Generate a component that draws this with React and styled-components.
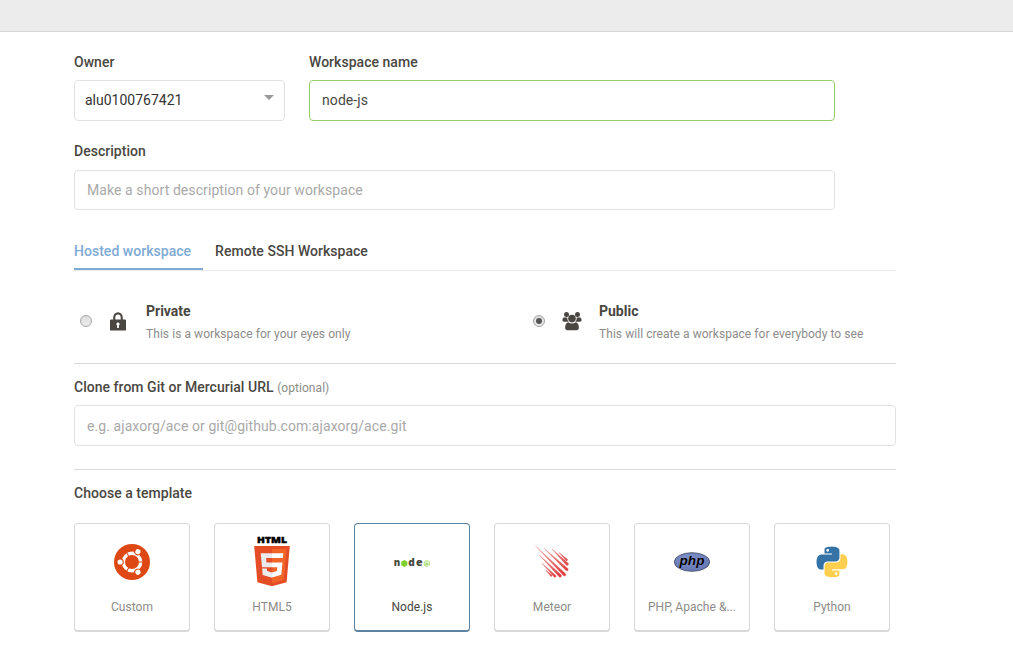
import React from "react";
import styled, { createGlobalStyle, css } from "styled-components";

const GlobalStyle = createGlobalStyle`
  * { box-sizing: border-box; }
  html, body { margin: 0; padding: 0; background: #fff; overflow: hidden; }
  body { font-family: Roboto, "Liberation Sans", sans-serif; font-size: 14px; color: #4a4742; }
`;

const TopBar = styled.header`
  height: 32px;
  background: #ececec;
  border-bottom: 1px solid #d9d9d9;
`;

const Form = styled.main`
  width: 822px;
  margin: 0 0 0 74px;
  padding-top: 21px;
`;

const FieldRow = styled.div`
  display: flex;
  gap: 24px;
  width: 761px;
`;

const Field = styled.div`
  width: ${(p) => p.$width || "100%"};
  margin-top: ${(p) => p.$top || 0}px;
`;

const Label = styled.label`
  display: block;
  height: 18px;
  line-height: 18px;
  font-weight: 500;
  letter-spacing: 0.03px;
  white-space: nowrap;
  margin-bottom: ${(p) => (p.$gap === undefined ? 9 : p.$gap)}px;
`;

const Optional = styled.span`
  font-size: 12px;
  font-weight: 400;
  letter-spacing: 0.06px;
  color: #8d8c8a;
`;

const boxed = css`
  display: flex;
  align-items: center;
  width: 100%;
  height: ${(p) => p.$height || 41}px;
  border: 1px solid ${(p) => (p.$valid ? "#98cc69" : "#e2e2e2")};
  border-radius: 4px;
  background: #fff;
`;

const Select = styled.div`
  ${boxed}
  justify-content: space-between;
  padding: 0 10px 2px;
  color: #333;
`;

const Arrow = styled.span`
  border: 5px solid transparent;
  border-top-color: #999;
  border-bottom: 0;
  margin-bottom: 4px;
`;

const Input = styled.input`
  ${boxed}
  padding: 0 12px ${(p) => (p.$valid ? 2 : 0)}px;
  font: inherit;
  color: #4a4742;
  letter-spacing: 0.08px;
  outline: none;
  &::placeholder { color: #a9a9a9; opacity: 1; }
`;

const Tabs = styled.nav`
  display: flex;
  gap: 12px;
  height: 39px;
  margin-top: 22px;
  border-bottom: 1px solid #ebebeb;
`;

const Tab = styled.a`
  height: 38px;
  padding: 10px 12px 0 0;
  line-height: 18px;
  font-weight: 500;
  letter-spacing: 0.03px;
  white-space: nowrap;
  color: ${(p) => (p.$active ? "#7eaad4" : "#4a4742")};
  border-bottom: 2px solid ${(p) => (p.$active ? "#7eaad4" : "transparent")};
`;

const Privacy = styled.section`
  display: grid;
  grid-template-columns: 453px 1fr;
  height: 93px;
  padding-top: 31px;
  border-bottom: 1px solid #d9d9d9;
`;

const Option = styled.div`
  display: grid;
  grid-template-columns: 30px 36px 1fr;
  padding-left: 6px;
`;

const Radio = styled.span`
  display: flex;
  align-items: center;
  justify-content: center;
  width: 12px;
  height: 12px;
  margin-top: 13px;
  border: 1px solid #a5a5a5;
  border-radius: 50%;
  background: linear-gradient(#dedede, #ececec);
  &::after {
    content: "";
    width: 6px;
    height: 6px;
    border-radius: 50%;
    background: ${(p) => (p.$checked ? "#555" : "transparent")};
  }
`;

const OptionIcon = styled.svg`
  display: block;
  width: 20px;
  height: 20px;
  margin: 9px 0 0 ${(p) => p.$shift || 0}px;
  fill: #4a4742;
`;

const OptionTitle = styled.div`
  line-height: 18px;
  font-weight: 700;
`;

const OptionNote = styled.div`
  margin-top: 5px;
  line-height: 18px;
  font-size: 12px;
  letter-spacing: 0.06px;
  color: #8d8c8a;
  white-space: nowrap;
`;

const Divider = styled.hr`
  margin: 23px 0 14px;
  border: 0;
  border-top: 1px solid #d9d9d9;
`;

const Templates = styled.div`
  display: flex;
  gap: 24px;
`;

const Card = styled.button`
  display: flex;
  flex-direction: column;
  align-items: center;
  width: 116px;
  height: 109px;
  padding: 8px 8px 0;
  font: inherit;
  font-size: 12px;
  letter-spacing: 0.04px;
  color: ${(p) => (p.$selected ? "#4a4742" : "#8d8c8a")};
  background: #fff;
  border: 1px solid ${(p) => (p.$selected ? "#5b82a3" : "#d9d9d9")};
  border-bottom-width: 2px;
  border-radius: 4px;
  box-shadow: 0 1px 0 rgba(0, 0, 0, 0.05);
`;

const Logo = styled.svg`
  display: block;
  width: 60px;
  height: 60px;
  flex: none;
`;

const CardName = styled.span`
  margin-top: 6px;
  line-height: 18px;
  white-space: nowrap;
`;

const LockIcon = () => (
  <OptionIcon viewBox="0 0 20 20">
    <path d="M3.2 8.5V6.4a4.8 5.2 0 0 1 9.6 0v2.1h2.2q1 0 1 1V19q0 .6-.8.6H.8Q0 19.600 0 19V9.500q0-1 1-1zM5.300 8.500h5.400V6.400a2.700 3 0 0 0-5.400 0zM8 11.500a1.700 1.700 0 0 0-.9 3.100V17h1.800v-2.400A1.700 1.700 0 0 0 8 11.500z" fillRule="evenodd" />
  </OptionIcon>
);

const GroupIcon = () => (
  <OptionIcon viewBox="0 0 20 20" $shift={-1}>
    <circle cx="4.500" cy="3.600" r="2.500" />
    <circle cx="15.500" cy="3.600" r="2.500" />
    <path d="M1.600 6.600h3.700q-.3 2.700 1.400 4.200H2Q.3 10.800.4 9q.1-1.700 1.200-2.400zM18.400 6.600h-3.700q.3 2.700-1.400 4.200H18q1.700 0 1.600-1.800-.1-1.700-1.200-2.400z" />
    <circle cx="10" cy="7.600" r="3.800" />
    <path d="M6.200 11.200q3.800 2.500 7.600 0 3.400 1 3 6.300-.2 1.700-2.200 1.700H5.400q-2 0-2.200-1.700-.4-5.300 3-6.300z" />
  </OptionIcon>
);

const UbuntuLogo = () => (
  <Logo viewBox="0 0 60 60">
    <circle cx="30" cy="30" r="18" fill="#dd4814" />
    <circle cx="30" cy="30" r="8.700" fill="none" stroke="#fff" strokeWidth="3.400" />
    {[0, 120, 240].map((angle) => (
      <g key={angle} transform={`rotate(${angle} 30 30)`}>
        <path d="M36 30h6" stroke="#dd4814" strokeWidth="1" />
        <circle cx="18.100" cy="30" r="3.700" fill="#dd4814" />
        <circle cx="18.100" cy="30" r="2.600" fill="#fff" />
      </g>
    ))}
  </Logo>
);

const Html5Logo = () => (
  <Logo viewBox="0 0 60 60">
    <text x="15" y="11" textLength="30" lengthAdjust="spacingAndGlyphs" fontFamily="Open Sans, sans-serif" fontWeight="800" fontSize="9.500" fill="#000" stroke="#000" strokeWidth=".5">HTML</text>
    <path d="M12.200 14h35.600l-3.200 36.300L30 54.300l-14.600-4z" fill="#e44d26" />
    <path d="M30 17h14.600l-2.800 31L30 51.300z" fill="#f16529" />
    <path d="M30 21.300H18.700l1.300 14h10v-4.800h-5.500l-.4-4.400H30zM30 40.400l-4.900-1.400-.3-2.600h-4.700l.6 6.600 9.300 2.700z" fill="#ebebeb" />
    <path d="M30 21.300h11.300l-.4 4.800H30zM30 30.500h10.500l-1.200 12.200-9.300 2.900v-5.200l4.900-1.400.4-3.700H30z" fill="#fff" />
  </Logo>
);

const NodeLogo = () => (
  <Logo viewBox="0 0 60 60">
    <g fontFamily="Open Sans, sans-serif" fontWeight="800" fontSize="10" fill="#46483e">
      <text x="11.700" y="34" textLength="6.500" lengthAdjust="spacingAndGlyphs">n</text>
      <text x="26.200" y="34" textLength="6.600" lengthAdjust="spacingAndGlyphs">d</text>
      <text x="34" y="34" textLength="6.600" lengthAdjust="spacingAndGlyphs">e</text>
    </g>
    <path d="M22.300 28l3.100 1.800v3.500l-3.100 1.800-3.100-1.800v-3.500z" fill="#80d02b" />
    <path d="M44.800 28.300l2.700 1.600v3.200l-2.700 1.600-2.700-1.600v-3.200z" fill="#d9f1be" stroke="#b5e385" strokeWidth=".8" />
    <text x="43" y="33.300" fontFamily="Roboto, sans-serif" fontSize="4" fill="#80c43b">js</text>
  </Logo>
);

const meteorStripes = [
  [13.3, 13.7, 42.6, 42.7, 2.7],
  [22, 16.3, 45, 37.6, 2.7],
  [30, 17, 45.2, 32.2, 2.6],
  [37, 20.5, 44.7, 28, 1.9],
  [17, 22.7, 38.3, 44, 2.7],
  [19.7, 31, 33, 44.3, 2.3],
  [23.5, 38, 29.3, 43.7, 1.7],
];

const MeteorLogo = () => (
  <Logo viewBox="0 0 60 60">
    <defs>
      <linearGradient id="meteor" gradientUnits="userSpaceOnUse" x1="17" y1="17" x2="40" y2="40">
        <stop offset="0" stopColor="#df4f4f" stopOpacity=".5" />
        <stop offset="1" stopColor="#de4040" />
      </linearGradient>
    </defs>
    {meteorStripes.map(([x1, y1, x2, y2, w]) => {
      const o = w * 0.35;
      return (
        <path
          key={`${x1}-${y1}`}
          d={`M${x1} ${y1}L${x2 + o} ${y2 - o}A${w / 2} ${w / 2} 0 0 1 ${x2 - o} ${y2 + o}z`}
          fill="url(#meteor)"
          stroke="url(#meteor)"
          strokeWidth=".4"
        />
      );
    })}
  </Logo>
);

const PhpLogo = () => (
  <Logo viewBox="0 0 60 60">
    <defs>
      <radialGradient id="php" cx=".4" cy=".3" r=".75">
        <stop offset="0" stopColor="#8090c8" />
        <stop offset="1" stopColor="#6276b2" />
      </radialGradient>
    </defs>
    <ellipse cx="30" cy="30" rx="17.700" ry="9.300" fill="url(#php)" stroke="#4a4f70" strokeWidth=".9" />
    <text x="17.500" y="33" textLength="25" lengthAdjust="spacingAndGlyphs" fontFamily="Liberation Sans, sans-serif" fontWeight="700" fontStyle="italic" fontSize="12.500" fill="#000" stroke="#8c9bcc" strokeWidth=".6" paintOrder="stroke">php</text>
  </Logo>
);

const snake =
  "M14.250.180l.9.200.730.260.590.300.450.320.340.340.250.340.160.330.100.300.040.260.020.200-.010.130V8.500l-.050.630-.130.550-.210.460-.260.380-.300.310-.330.250-.350.190-.350.140-.330.100-.300.070-.260.040-.210.020H8.770l-.690.050-.590.140-.500.220-.410.270-.330.320-.270.350-.200.360-.150.370-.100.350-.070.320-.040.270-.020.210v3.060H3.170l-.210-.030-.280-.070-.320-.120-.350-.180-.360-.260-.360-.360-.350-.460-.320-.590-.280-.730-.210-.880-.140-1.050-.050-1.230.060-1.220.160-1.040.240-.870.320-.710.360-.570.400-.440.420-.330.420-.240.400-.160.360-.100.320-.050.240-.010h.160l.060.010h8.160v-.830H6.180l-.010-2.750-.020-.370.050-.340.110-.310.170-.280.250-.260.310-.230.380-.200.440-.180.510-.150.580-.120.640-.100.710-.060.770-.040.840-.020 1.270.050zm-6.300 1.980l-.230.330-.080.410.080.410.230.340.330.220.410.090.410-.090.330-.220.230-.340.080-.410-.080-.410-.230-.330-.330-.220-.410-.090-.410.090z";

const PythonLogo = () => (
  <Logo viewBox="0 0 60 60">
    <g transform="translate(14.600 14.600) scale(1.280)">
      <path d={snake} fill="#3572a5" />
      <path d={snake} fill="#ffd04f" transform="rotate(180 12 12)" />
    </g>
  </Logo>
);

const templates = [
  { name: "Custom", Icon: UbuntuLogo },
  { name: "HTML5", Icon: Html5Logo },
  { name: "Node.js", Icon: NodeLogo, selected: true },
  { name: "Meteor", Icon: MeteorLogo },
  { name: "PHP, Apache &...", Icon: PhpLogo },
  { name: "Python", Icon: PythonLogo },
];

export default function App() {
  return (
    <>
      <GlobalStyle />
      <TopBar />
      <Form>
        <FieldRow>
          <Field $width="211px">
            <Label>Owner</Label>
            <Select>
              alu0100767421
              <Arrow />
            </Select>
          </Field>
          <Field $width="526px">
            <Label>Workspace name</Label>
            <Input $valid defaultValue="node-js" />
          </Field>
        </FieldRow>
        <Field $width="761px" $top={21}>
          <Label $gap={10}>Description</Label>
          <Input $height={40} placeholder="Make a short description of your workspace" />
        </Field>
        <Tabs>
          <Tab $active>Hosted workspace</Tab>
          <Tab>Remote SSH Workspace</Tab>
        </Tabs>
        <Privacy>
          <Option>
            <Radio />
            <LockIcon />
            <div>
              <OptionTitle>Private</OptionTitle>
              <OptionNote>This is a workspace for your eyes only</OptionNote>
            </div>
          </Option>
          <Option>
            <Radio $checked />
            <GroupIcon />
            <div>
              <OptionTitle>Public</OptionTitle>
              <OptionNote>This will create a workspace for everybody to see</OptionNote>
            </div>
          </Option>
        </Privacy>
        <Field $top={14}>
          <Label>
            Clone from Git or Mercurial URL <Optional>(optional)</Optional>
          </Label>
          <Input placeholder="e.g. ajaxorg/ace or git@github.com:ajaxorg/ace.git" />
        </Field>
        <Divider />
        <Label $gap={21}>Choose a template</Label>
        <Templates>
          {templates.map(({ name, Icon, selected }) => (
            <Card key={name} type="button" $selected={selected}>
              <Icon />
              <CardName>{name}</CardName>
            </Card>
          ))}
        </Templates>
      </Form>
    </>
  );
}
